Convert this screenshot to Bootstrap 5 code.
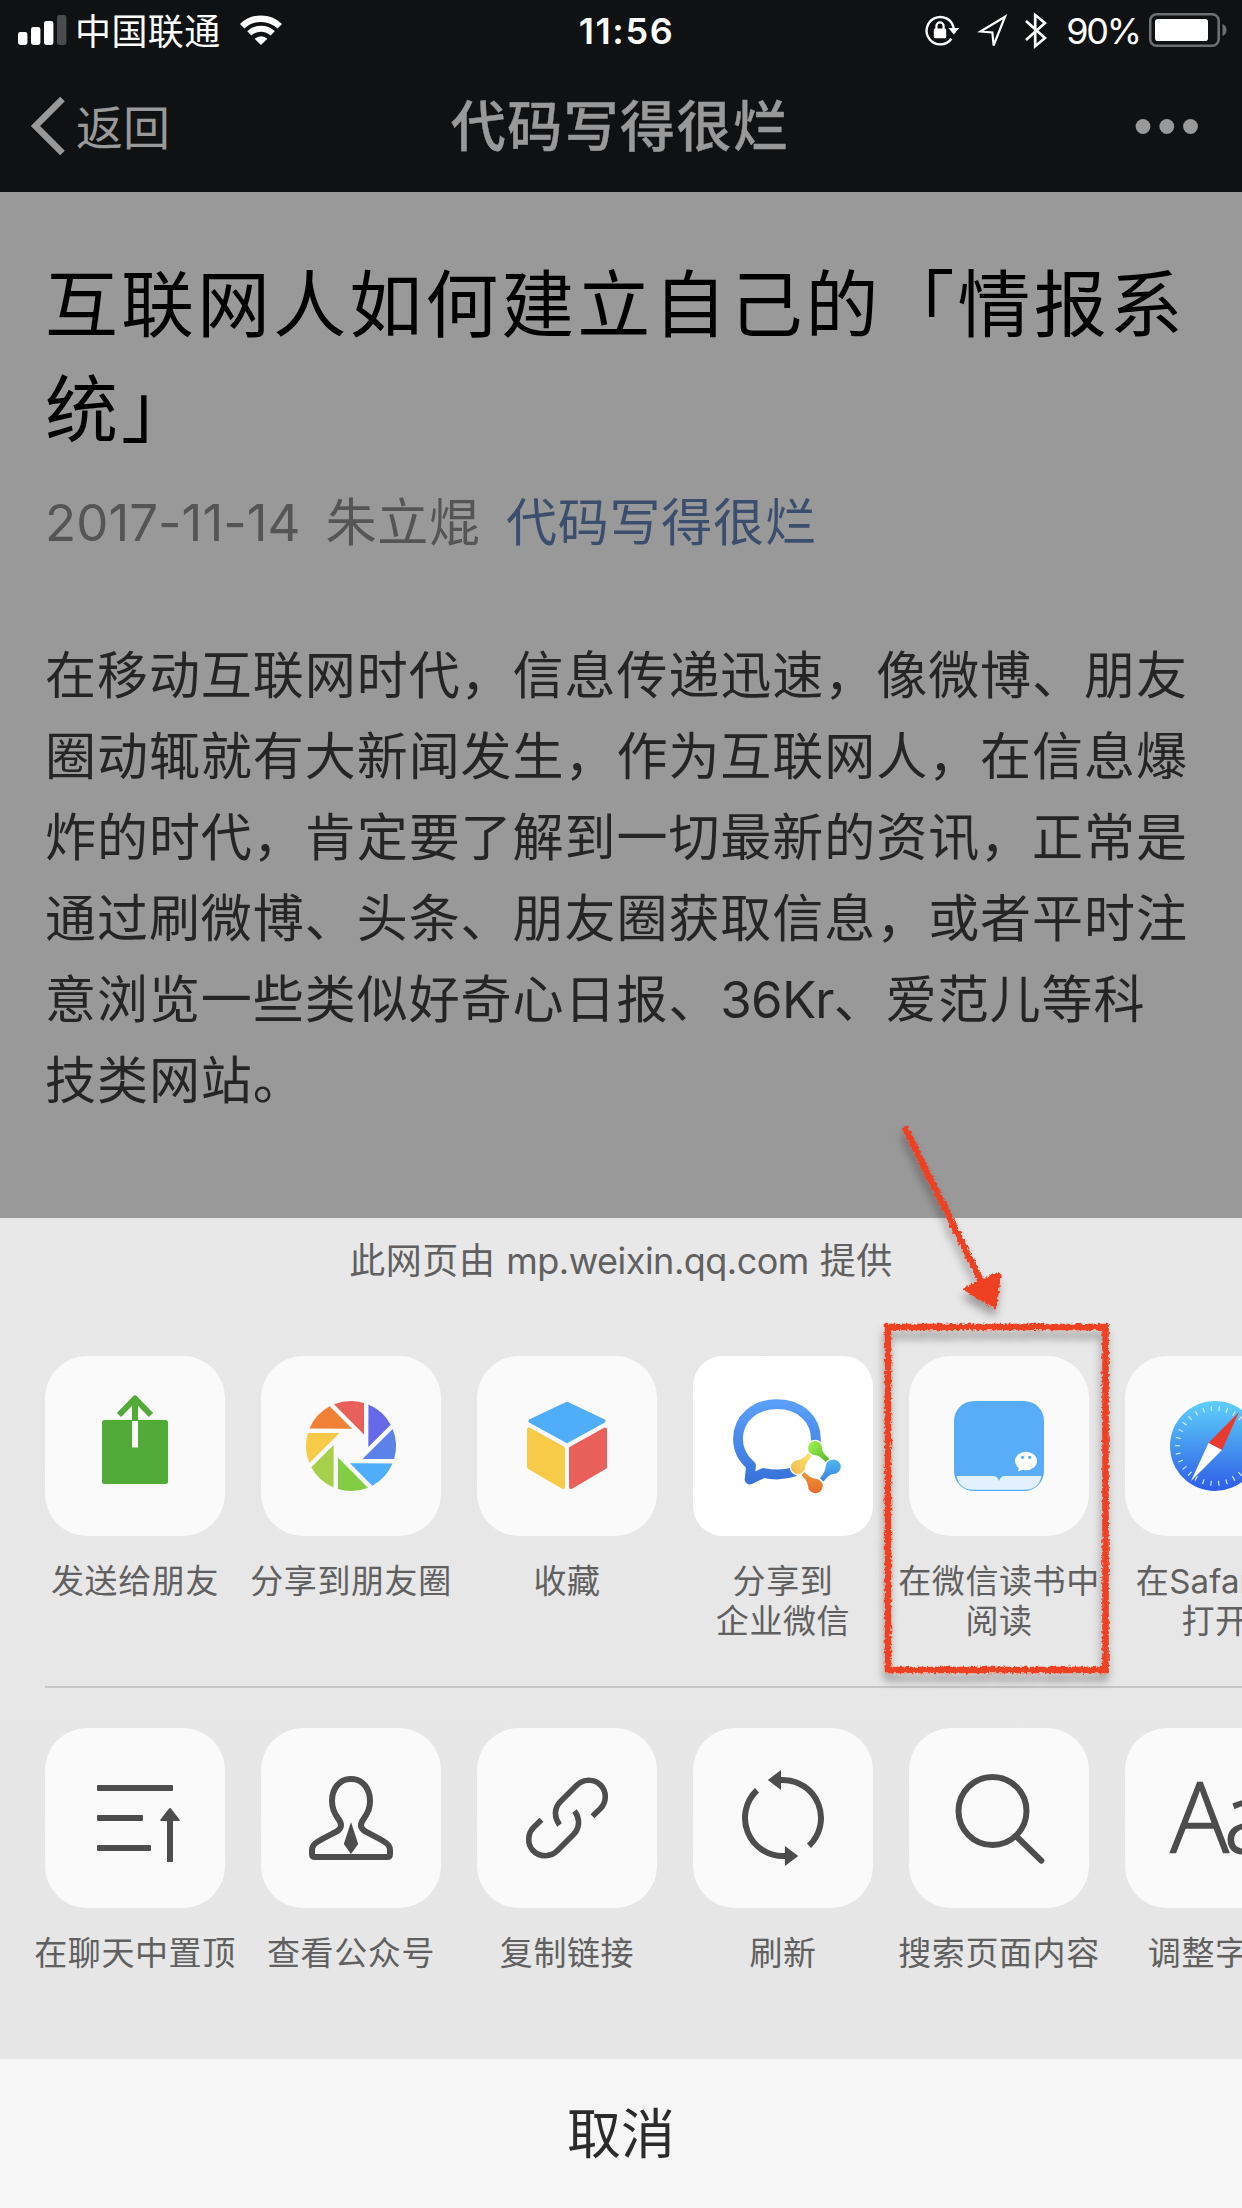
<!DOCTYPE html>
<html lang="zh-CN">
<head>
<meta charset="utf-8">
<meta name="viewport" content="width=device-width, initial-scale=1">
<title>代码写得很烂</title>
<link href="https://cdn.jsdelivr.net/npm/bootstrap@5.3.0/dist/css/bootstrap.min.css" rel="stylesheet">
<style>
  body { width: 1242px; height: 2208px; overflow: hidden; background: #999; color: #000;
         font-family: Inter, "Noto Sans CJK SC", sans-serif; }
  svg { display: block; flex: none; }
  .top-area { height: 192px; background: #101112; }
  .status-bar { height: 60px; color: #fff; font-size: 36px; line-height: 60px; padding: 0 15px 0 18px; }
  .status-side { width: 480px; }
  .status-time { font-weight: 600; font-size: 36px; letter-spacing: 1.6px; padding-top: 1px; margin-left: 8px; }
  .carrier { letter-spacing: .4px; margin-left: 8px; padding-top: 3px; }
  .wifi { margin-right: 216px; }
  .battery-text { letter-spacing: -2.2px; padding-top: 1px; margin-left: 19px; }
  .battery { margin-left: 9px; }
  .nav-row { height: 132px; color: #999; padding: 0 44px 0 30px; }
  .nav-side { width: 240px; }
  .nav-back { font-size: 47px; line-height: 132px; margin-left: 10px; padding-top: 3px; }
  .nav-heading { font-size: 55px; font-weight: 500; letter-spacing: 1.4px; line-height: 128px; margin-left: 12px; -webkit-text-stroke: .4px #999; }
  .article { height: 1026px; padding: 60px 0 0 45px; }
  .article-title { font-size: 73px; letter-spacing: 3.05px; line-height: 105px; font-weight: 400; margin: 0; }
  .article-meta { font-size: 51px; letter-spacing: .8px; line-height: 76px; color: #555; margin-top: 23px; gap: 25px; }
  .article-meta .meta-date { letter-spacing: .05px; }
  .article-meta a { color: #3c4e6e; text-decoration: none; }
  .article-text { font-size: 51px; letter-spacing: .95px; line-height: 81px; color: #252525; margin: 74px 0 0; }
  .latin-run { letter-spacing: -.8px; }
  .sheet { height: 841px; background: linear-gradient(#e8e8e8, #e6e6e6); }
  .sheet-source { height: 138px; font-size: 36px; letter-spacing: .6px; line-height: 86px; color: #606060; }
  .sheet-source span { letter-spacing: -.5px; }
  .action-row { padding-left: 27px; overflow: hidden; }
  .row-share { height: 330px; }
  .row-tools { height: 331px; }
  .sheet-rule { height: 42px; margin-left: 45px; border-top: 2px solid #c6c6c8; }
  .action { width: 216px; flex: none; }
  .tile { width: 180px; height: 180px; border-radius: 42px; background: #fafafa; overflow: hidden; }
  .tile-plain { background: #fff; border-radius: 30px; }
  .action-label { font-size: 33px; letter-spacing: .6px; line-height: 40px; color: #606060; text-align: center;
                  white-space: nowrap; margin-top: 25px; }
  .action-label .app-name { letter-spacing: .1px; }
  .cancel-bar { height: 149px; background: #f6f6f6; color: #2b2b2b; font-size: 54px; line-height: 151px; }
  .annotation { left: 860px; top: 1110px; pointer-events: none; }
</style>
</head>
<body class="position-relative m-0">

<header class="top-area">
  <div class="status-bar d-flex justify-content-between">
    <div class="status-side d-flex align-items-center">
      <svg width="49" height="60" viewBox="0 0 49 60" fill="#fff">
        <rect x="0" y="32" width="9.4" height="13" rx="2.4"/><rect x="13" y="27" width="9.4" height="18" rx="2.4"/>
        <rect x="26" y="21" width="9.4" height="24" rx="2.4"/><rect x="39" y="15" width="9.4" height="30" rx="2.4" fill="#4b4b4d"/>
      </svg>
      <span class="carrier">中国联通</span>
      <svg class="wifi ms-auto" width="42" height="60" viewBox="0 0 42 60" fill="none" stroke="#fff">
        <path d="M2.200 26.300A27 27 0 0 1 39.800 26.300" stroke-width="6.400"/>
        <path d="M9.300 33.400A17 17 0 0 1 32.700 33.400" stroke-width="6"/>
        <path d="M21 45L14.600 38.800A9.200 9.200 0 0 1 27.400 38.800Z" fill="#fff" stroke="none"/>
      </svg>
    </div>
    <span class="status-time">11:56</span>
    <div class="status-side d-flex align-items-center justify-content-end">
      <svg width="128" height="60" viewBox="920 0 128 60" fill="none" stroke="#fff">
        <path d="M952.400 38.700A13.700 13.700 0 1 1 954.700 28" stroke-width="2.400"/>
        <path d="M949.400 28H960.200L954.800 34.500Z" fill="#fff" stroke="none"/>
        <rect x="934.800" y="28.600" width="12.400" height="9.600" rx="1.400" fill="#fff" stroke="none"/>
        <path d="M937.400 29V26A3.600 3.600 0 0 1 944.600 26V29" stroke-width="2.200"/>
        <path d="M1006 18.200L981.500 33L993.400 34L994.600 47Z" stroke-width="2.200" transform="translate(0 -1.500)"/>
        <path d="M1027 21L1046 38L1036.200 46.200V15L1046 23L1027 40" stroke-width="2.700"/>
      </svg>
      <span class="battery-text">90%</span>
      <svg class="battery" width="78" height="60" viewBox="0 0 78 60">
        <rect x="1.200" y="14.200" width="68.500" height="31.600" rx="6.500" fill="none" stroke="#6f6f71" stroke-width="2.600"/>
        <rect x="6" y="19" width="53" height="22" rx="2.800" fill="#fff"/>
        <path d="M73.500 24Q77.500 25.500 77.500 30T73.500 36Z" fill="#6f6f71"/>
      </svg>
    </div>
  </div>
  <nav class="nav-row d-flex justify-content-between align-items-center">
    <div class="nav-side d-flex align-items-center">
      <svg width="36" height="132" viewBox="0 0 36 132"><path d="M32.500 39L5.500 66L32.500 93" fill="none" stroke="#999" stroke-width="6.600"/></svg>
      <span class="nav-back">返回</span>
    </div>
    <span class="nav-heading">代码写得很烂</span>
    <div class="nav-side d-flex justify-content-end">
      <svg width="63" height="132" viewBox="0 0 63 132" fill="#999"><circle cx="8" cy="66.500" r="7.400"/><circle cx="31.800" cy="66.500" r="7.400"/><circle cx="55.500" cy="66.500" r="7.400"/></svg>
    </div>
  </nav>
</header>

<main class="article">
  <h1 class="article-title">互联网人如何建立自己的「情报系<br>统」</h1>
  <div class="article-meta d-flex">
    <span class="meta-date">2017-11-14</span><span>朱立焜</span><a href="#">代码写得很烂</a>
  </div>
  <p class="article-text text-nowrap">在移动互联网时代，信息传递迅速，像微博、朋友<br>圈动辄就有大新闻发生，作为互联网人，在信息爆<br>炸的时代，肯定要了解到一切最新的资讯，正常是<br>通过刷微博、头条、朋友圈获取信息，或者平时注<br>意浏览一些类似好奇心日报、<span class="latin-run">36Kr</span>、爱范儿等科<br>技类网站。</p>
</main>

<section class="sheet">
  <div class="sheet-source text-center">此网页由 <span>mp.weixin.qq.com</span> 提供</div>

  <div class="action-row row-share d-flex">
    <div class="action d-flex flex-column align-items-center">
      <div class="tile"><svg width="180" height="180" viewBox="0 0 180 180">
        <rect x="57" y="64" width="66" height="64" rx="2.500" fill="#52aa38"/>
        <path d="M90 64V43M74 59L90 42.500L106 59" fill="none" stroke="#52aa38" stroke-width="6" stroke-linejoin="round"/>
        <path d="M90 65V91.500" stroke="#fafafa" stroke-width="6"/>
      </svg></div>
      <div class="action-label">发送给朋友</div>
    </div>
    <div class="action d-flex flex-column align-items-center">
      <div class="tile"><svg width="180" height="180" viewBox="-90 -90 180 180">
        <defs><path id="blade" d="M-17-41.700A45 45 0 0 1 13-43.100V-11.500Z"/></defs>
        <use href="#blade" fill="#e9605b"/>
        <use href="#blade" fill="#6669e9" transform="rotate(45)"/>
        <use href="#blade" fill="#5c82e9" transform="rotate(90)"/>
        <use href="#blade" fill="#4fadfa" transform="rotate(135)"/>
        <use href="#blade" fill="#83cd45" transform="rotate(180)"/>
        <use href="#blade" fill="#a6d04a" transform="rotate(225)"/>
        <use href="#blade" fill="#f7ca48" transform="rotate(270)"/>
        <use href="#blade" fill="#ef8036" transform="rotate(315)"/>
      </svg></div>
      <div class="action-label">分享到朋友圈</div>
    </div>
    <div class="action d-flex flex-column align-items-center">
      <div class="tile"><svg width="180" height="180" viewBox="0 0 180 180" stroke-width="4" stroke-linejoin="round">
        <path d="M90 47.800L126.500 65L90 85L53.500 65Z" fill="#4fadfa" stroke="#4fadfa"/>
        <path d="M52 73.500L86 92.500V131L52 111Z" fill="#f7ca48" stroke="#f7ca48"/>
        <path d="M128 73.500L94 92.500V131L128 111Z" fill="#e9605b" stroke="#e9605b"/>
      </svg></div>
      <div class="action-label">收藏</div>
    </div>
    <div class="action d-flex flex-column align-items-center">
      <div class="tile tile-plain"><svg width="180" height="180" viewBox="0 0 180 180">
        <defs>
          <linearGradient id="chatBlue" x1="0" y1="0" x2="0" y2="1"><stop offset="0" stop-color="#5a9ff9"/><stop offset="1" stop-color="#3873da"/></linearGradient>
          <linearGradient id="dropGreen" x1="0" y1="0" x2="1" y2="1"><stop offset="0" stop-color="#a4f550"/><stop offset="1" stop-color="#55b42c"/></linearGradient>
          <linearGradient id="dropBlue" x1="0" y1="0" x2="0" y2="1"><stop offset="0" stop-color="#4fb7ea"/><stop offset="1" stop-color="#3a82e8"/></linearGradient>
          <linearGradient id="dropOrange" x1="0" y1="0" x2="0" y2="1"><stop offset="0" stop-color="#ec9a38"/><stop offset="1" stop-color="#e8692c"/></linearGradient>
          <linearGradient id="dropYellow" x1="0" y1="1" x2="1" y2="0"><stop offset="0" stop-color="#f0b950"/><stop offset="1" stop-color="#fbe56c"/></linearGradient>
        </defs>
        <path d="M122.800 87C124.500 63 107 48.200 84 48.200C61 48.200 45 63 45 83C45 94 49 102 58 109.500L56.600 123.500L70.500 117C80 119 92 119 102 115.500" fill="none" stroke="url(#chatBlue)" stroke-width="9.800" stroke-linejoin="round"/>
        <g stroke="#fff" stroke-width="2.500" paint-order="stroke">
          <path d="M97.900 111C98.500 105 103 104.500 107 103.500C111 102.500 113 99 115.500 97L118.500 100C116 104 113 106 112.100 111A7.100 7.100 0 1 1 97.900 111Z" fill="url(#dropYellow)"/>
          <path d="M115.100 92A7 7 0 1 1 129.100 92C129 97 134 100 136.500 103L133.500 106.500C129 103 127 99.500 122 99.200A7 7 0 0 1 115.100 92Z" fill="url(#dropGreen)"/>
          <path d="M139.500 103.700A7.200 7.200 0 1 1 140 118C135 119 133 123 130.500 125.500L127 122.500C130 118 132 116 132.600 111A7.200 7.200 0 0 1 139.500 103.700Z" fill="url(#dropBlue)"/>
          <path d="M122 137.200A7.200 7.200 0 0 1 115 130C114.500 125 110.500 121.500 108.500 119L111.500 116C115 119.500 118 122 123 122.800A7.200 7.200 0 0 1 122 137.200Z" fill="url(#dropOrange)"/>
        </g>
      </svg></div>
      <div class="action-label">分享到<br>企业微信</div>
    </div>
    <div class="action d-flex flex-column align-items-center">
      <div class="tile"><svg width="180" height="180" viewBox="0 0 180 180">
        <rect x="45" y="45" width="90" height="90" rx="20" fill="#59adf8"/>
        <path d="M47.600 120H84Q88.500 120 90 125Q91.500 120 96 120H132.400Q130 133.800 115 133.800H65Q50 133.800 47.600 120Z" fill="#e3f1fe"/>
        <ellipse cx="117" cy="105" rx="11" ry="9.200" fill="#fff"/><path d="M110 111L109 115.500L115 113Z" fill="#fff"/>
        <circle cx="113.600" cy="101.300" r="1.600" fill="#59adf8"/><circle cx="120.700" cy="101.300" r="1.600" fill="#59adf8"/>
      </svg></div>
      <div class="action-label">在微信读书中<br>阅读</div>
    </div>
    <div class="action d-flex flex-column align-items-center">
      <div class="tile"><svg width="180" height="180" viewBox="0 0 180 180">
        <defs><linearGradient id="compassBlue" x1="0" y1="0" x2="0" y2="1"><stop offset="0" stop-color="#5fd0fb"/><stop offset=".5" stop-color="#4596ef"/><stop offset="1" stop-color="#2f5de8"/></linearGradient></defs>
        <circle cx="90" cy="90" r="45" fill="url(#compassBlue)"/>
        <circle cx="90" cy="90" r="37.500" fill="none" stroke="#d9f0ff" stroke-width="5" stroke-dasharray="1.100 6.754" stroke-dashoffset=".55"/>
        <path d="M114 56L97 94L83.500 87Z" fill="#ea3a2d"/><path d="M83.500 87L97 94L66 125Z" fill="#fff"/>
      </svg></div>
      <div class="action-label">在<span class="app-name">Safari</span>中<br>打开</div>
    </div>
  </div>

  <div class="sheet-rule"></div>

  <div class="action-row row-tools d-flex">
    <div class="action d-flex flex-column align-items-center">
      <div class="tile"><svg width="180" height="180" viewBox="0 0 180 180" fill="#4d4d4d">
        <rect x="52" y="57" width="76" height="6" rx="1"/><rect x="52" y="87" width="46" height="6" rx="1"/><rect x="52" y="117" width="54" height="6" rx="1"/>
        <path d="M122 134V93H116Q114.500 93 115.500 91.500L124 80.500Q125 79.500 126 80.500L134.500 91.500Q135.500 93 134 93H128V134Z"/>
      </svg></div>
      <div class="action-label">在聊天中置顶</div>
    </div>
    <div class="action d-flex flex-column align-items-center">
      <div class="tile"><svg width="180" height="180" viewBox="0 0 180 180">
        <path d="M90 51C78 51 71 61 71 73C71 88 80 90.500 80 97C80 103.500 73 104 57 113.500Q51 117 51 122V126Q51 129 54 129H126Q129 129 129 126V122Q129 117 123 113.500C107 104 100 103.500 100 97C100 90.500 109 88 109 73C109 61 102 51 90 51Z" fill="none" stroke="#4d4d4d" stroke-width="6"/>
        <path d="M90 94L97.200 116L90 126L82.800 116Z" fill="#4d4d4d"/>
      </svg></div>
      <div class="action-label">查看公众号</div>
    </div>
    <div class="action d-flex flex-column align-items-center">
      <div class="tile"><svg width="180" height="180" viewBox="0 0 180 180" fill="none" stroke="#4d4d4d" stroke-width="5.600">
        <path id="linkHalf" d="M82.500 97C76.500 89 77.500 79.500 83.500 73.500L99.500 57.500C106 51 117 50 124 57.500C130 64 129.500 74.500 123.500 80.500L115.500 88.300"/>
        <use href="#linkHalf" transform="rotate(180 90 90)"/>
      </svg></div>
      <div class="action-label">复制链接</div>
    </div>
    <div class="action d-flex flex-column align-items-center">
      <div class="tile"><svg width="180" height="180" viewBox="0 0 180 180">
        <g id="turnHalf"><path d="M88 52H90A38 38 0 0 1 116 117.700" fill="none" stroke="#4d4d4d" stroke-width="6"/><path d="M74.800 52L88 42V62Z" fill="#4d4d4d"/></g>
        <use href="#turnHalf" transform="rotate(180 90 90)"/>
      </svg></div>
      <div class="action-label">刷新</div>
    </div>
    <div class="action d-flex flex-column align-items-center">
      <div class="tile"><svg width="180" height="180" viewBox="0 0 180 180" fill="none" stroke="#4d4d4d" stroke-width="6">
        <circle cx="83.500" cy="83" r="34"/><path d="M108 109L132.300 132.700" stroke-linecap="round"/>
      </svg></div>
      <div class="action-label">搜索页面内容</div>
    </div>
    <div class="action d-flex flex-column align-items-center">
      <div class="tile"><svg width="180" height="180" viewBox="0 0 180 180">
        <text x="45.500" y="125" font-family="Open Sans, Inter, sans-serif" font-weight="300" font-size="97" letter-spacing="-5" fill="#4d4d4d" stroke="#4d4d4d" stroke-width="1.600">Aa</text>
      </svg></div>
      <div class="action-label">调整字体</div>
    </div>
  </div>
</section>

<footer class="cancel-bar text-center">取消</footer>

<!-- hand-drawn marker over the reading action -->
<svg class="annotation position-absolute" width="270" height="590" viewBox="860 1110 270 590">
  <defs><filter id="chalk" filterUnits="userSpaceOnUse" x="860" y="1110" width="270" height="590">
    <feTurbulence type="fractalNoise" baseFrequency=".35" numOctaves="2" seed="4" result="grain"/>
    <feDisplacementMap in="SourceGraphic" in2="grain" scale="5" xChannelSelector="R" yChannelSelector="G" result="rough"/>
    <feDropShadow in="rough" dx="-1" dy="8" stdDeviation="4" flood-color="#000" flood-opacity=".32"/>
  </filter></defs>
  <g filter="url(#chalk)" stroke="#ee4023" fill="none">
    <rect x="888" y="1327" width="217.500" height="343" stroke-width="6.600"/>
    <path d="M904.500 1127L981 1281" stroke-width="6.500"/>
    <path d="M967 1289L998.500 1274.500L994.500 1306Z" fill="#ee4023" stroke-width="5" stroke-linejoin="round"/>
  </g>
</svg>

<script src="https://cdn.jsdelivr.net/npm/bootstrap@5.3.0/dist/js/bootstrap.bundle.min.js"></script>
</body>
</html>
